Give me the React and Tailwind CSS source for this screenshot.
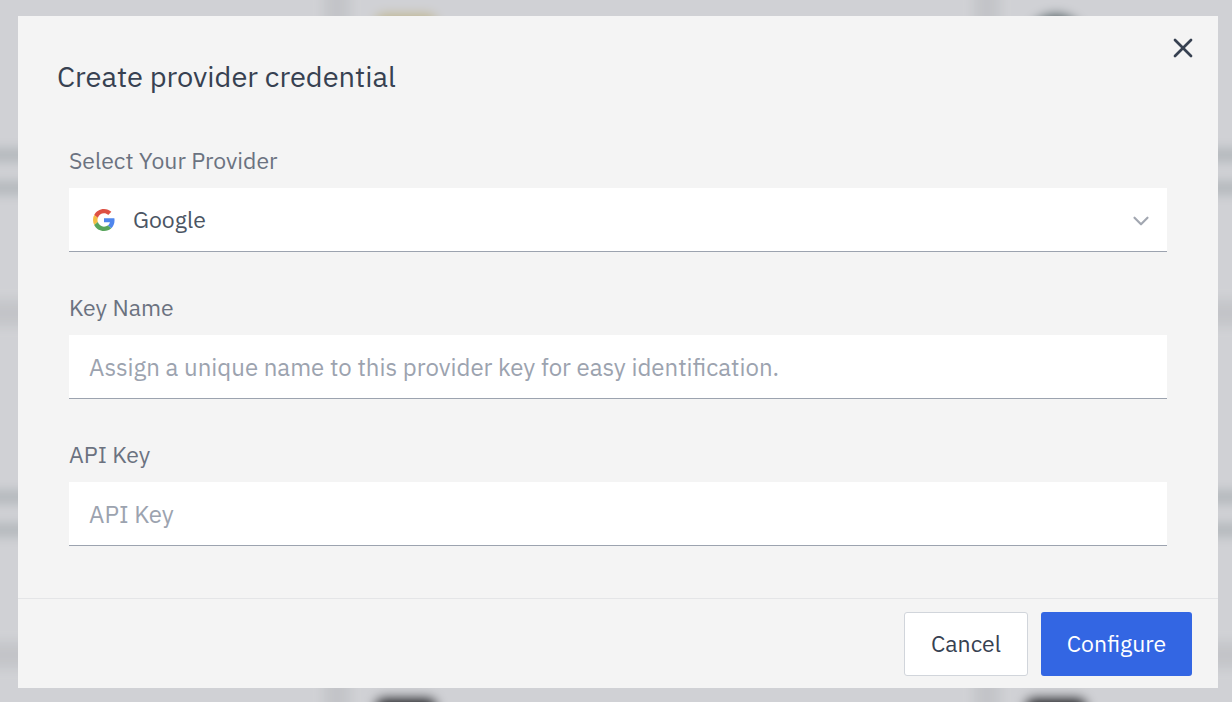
import { useState } from "react";
import { ChevronDown, X } from "lucide-react";

function GoogleLogo({ className }) {
  return (
    <svg className={className} viewBox="0 0 48 48" aria-hidden="true">
      <path fill="#dd5144" d="M24 9.5c3.54 0 6.71 1.22 9.21 3.6l6.85-6.85C35.9 2.38 30.47 0 24 0 14.62 0 6.51 5.38 2.56 13.22l7.98 6.19C12.43 13.72 17.74 9.5 24 9.5z" />
      <path fill="#4f86ed" d="M46.98 24.55c0-1.57-.15-3.09-.38-4.55H24v9.02h12.94c-.58 2.96-2.26 5.48-4.78 7.18l7.73 6c4.51-4.18 7.09-10.36 7.09-17.65z" />
      <path fill="#f3bd42" d="M10.53 28.59c-.48-1.45-.76-2.99-.76-4.59s.27-3.14.76-4.59l-7.98-6.19C.92 16.46 0 20.12 0 24c0 3.88.92 7.54 2.56 10.78l7.97-6.19z" />
      <path fill="#58a55c" d="M24 48c6.48 0 11.93-2.13 15.89-5.81l-7.73-6c-2.15 1.45-4.92 2.3-8.16 2.3-6.26 0-11.57-4.22-13.47-9.91l-7.98 6.19C6.51 42.62 14.62 48 24 48z" />
    </svg>
  );
}

const providerTiles = [
  "rounded-lg bg-[#59636b]",
  "rounded-lg bg-[#bdb287]",
  "rounded-full bg-[#4a585c]",
  "rounded-lg bg-[#34353a]",
  "rounded-lg bg-[#34353a]",
  "rounded-lg bg-[#34353a]",
  "rounded-lg bg-[#34353a]",
  "rounded-lg bg-[#1d1e22]",
  "rounded-lg bg-[#1d1e22]",
];

function Backdrop() {
  return (
    <div className="absolute inset-0 overflow-hidden bg-[#c4c5c9]" aria-hidden="true">
      <div className="-mt-4 -ml-[300px] grid w-max grid-cols-[repeat(3,624px)] gap-[26px] blur-[6px]">
        {providerTiles.map((tile, index) => (
          <div key={index} className="flex h-[316px] flex-col bg-[#d0d1d5] px-[26px] pt-[31px]">
            <div className={`size-[60px] ${tile}`} />
            <div className="mt-[74px] h-3 bg-[#b0b5b9]" />
            <div className="mt-[21px] h-3 bg-[#b0b5b9]" />
          </div>
        ))}
      </div>
    </div>
  );
}

const fieldClass =
  "h-16 w-full rounded-none border-b border-[#9ca3af] bg-white outline-none focus:border-[#3366e3]";

function Field({ id, label, children }) {
  return (
    <div className="flex flex-col gap-3">
      <label htmlFor={id} className="text-[23px] leading-8 text-[#6b7280]">
        {label}
      </label>
      {children}
    </div>
  );
}

export default function App() {
  const [provider, setProvider] = useState("Google");

  return (
    <div className="relative flex min-h-screen items-center overflow-hidden py-4 pr-[14px] pl-[18px] font-['IBM_Plex_Sans','Noto_Sans',sans-serif]">
      <Backdrop />
      <form
        role="dialog"
        aria-modal="true"
        aria-labelledby="dialog-title"
        className="relative flex w-full flex-col bg-[#f4f4f4]"
        onSubmit={(event) => event.preventDefault()}
      >
        <header className="flex items-start justify-between pt-4 pr-[19px] pl-[39px]">
          <h1 id="dialog-title" className="pt-6 text-[29px] leading-10 text-[#374151]">
            Create provider credential
          </h1>
          <button type="button" aria-label="Close" className="text-[#374151]">
            <X size={32} />
          </button>
        </header>

        <div className="flex flex-col gap-[39px] px-[51px] pt-12 pb-[52px]">
          <Field id="provider" label="Select Your Provider">
            <div className="relative">
              <select
                id="provider"
                value={provider}
                onChange={(event) => setProvider(event.target.value)}
                className={`${fieldClass} appearance-none pr-14 pl-16 text-[23px] text-[#4b5563]`}
              >
                <option>Google</option>
              </select>
              <GoogleLogo className="pointer-events-none absolute top-[21px] left-6 size-[22px]" />
              <ChevronDown
                size={26}
                className="pointer-events-none absolute top-5 right-[13px] text-[#a2a7b1]"
              />
            </div>
          </Field>

          <Field id="key-name" label="Key Name">
            <input
              id="key-name"
              type="text"
              placeholder="Assign a unique name to this provider key for easy identification."
              className={`${fieldClass} px-5 text-[24px] text-[#374151] placeholder:text-[#9ca3af]`}
            />
          </Field>

          <Field id="api-key" label="API Key">
            <input
              id="api-key"
              type="text"
              placeholder="API Key"
              className={`${fieldClass} px-5 text-[24px] text-[#374151] placeholder:text-[#9ca3af]`}
            />
          </Field>
        </div>

        <footer className="flex justify-end gap-[13px] border-t border-[#e4e5e7] pt-[13px] pr-[26px] pb-3">
          <button
            type="button"
            className="h-16 w-[124px] rounded-[3px] border border-[#d1d5db] bg-white pb-0.5 text-[23px] text-[#374151]"
          >
            Cancel
          </button>
          <button type="submit" className="h-16 w-[151px] rounded-[3px] bg-[#3366e3] pb-0.5 text-[23px] text-white">
            Configure
          </button>
        </footer>
      </form>
    </div>
  );
}
